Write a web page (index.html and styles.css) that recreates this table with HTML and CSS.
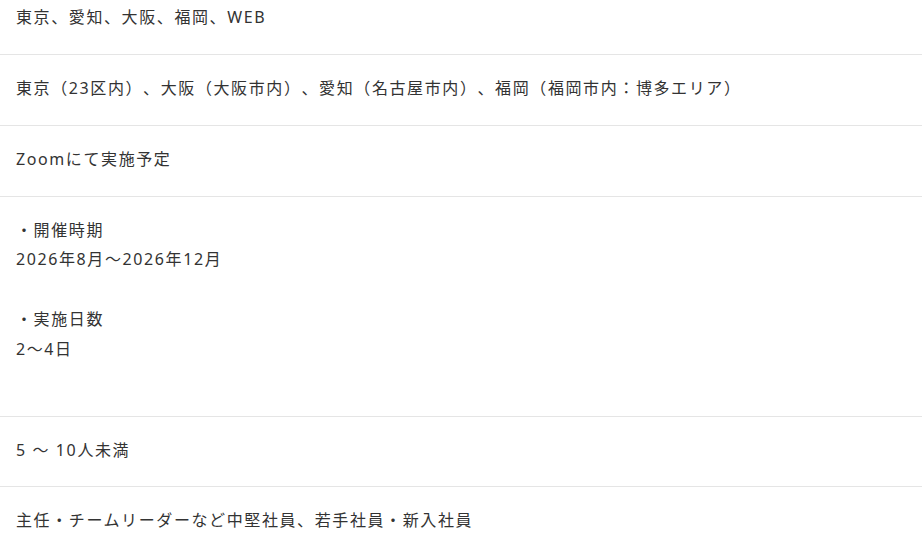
FILE: index.html
```html
<!DOCTYPE html>
<html lang="ja">
<head>
    <meta charset="UTF-8">
    <meta name="viewport" content="width=device-width, initial-scale=1.0">
    <title>研修概要</title>
    <link rel="stylesheet" href="styles.css">
</head>
<body>
    <!-- 研修概要リスト -->
    <div class="info-list">
        <div class="info-row">
            <p>東京、愛知、大阪、福岡、WEB</p>
        </div>
        <div class="info-row">
            <p>東京（23区内）、大阪（大阪市内）、愛知（名古屋市内）、福岡（福岡市内：博多エリア）</p>
        </div>
        <div class="info-row">
            <p>Zoomにて実施予定</p>
        </div>
        <div class="info-row">
            <p>・開催時期<br>2026年8月～2026年12月<br><br>・実施日数<br>2～4日<br><br></p>
        </div>
        <div class="info-row">
            <p>5 ～ 10人未満</p>
        </div>
        <div class="info-row">
            <p>主任・チームリーダーなど中堅社員、若手社員・新入社員</p>
        </div>
    </div>
</body>
</html>
```

FILE: styles.css
```css
/* 共通スタイル */
body {
    margin: 0;
    font-family: "Noto Sans", "Noto Sans CJK JP", sans-serif;
    background-color: #fff;
    color: #333;
    overflow: hidden;
}

/* リスト（スクロール位置を再現するため少し上にずらす） */
.info-list {
    margin-top: -16px;
}

.info-row {
    padding: 19px 16px 21px;
    border-bottom: 1px solid #e5e5e5;
}

.info-row p {
    margin: 0;
    font-size: 16px;
    line-height: 29.85px;
    letter-spacing: 0.1em;
    text-spacing-trim: space-all; /* 約物を詰めない */
}
```
